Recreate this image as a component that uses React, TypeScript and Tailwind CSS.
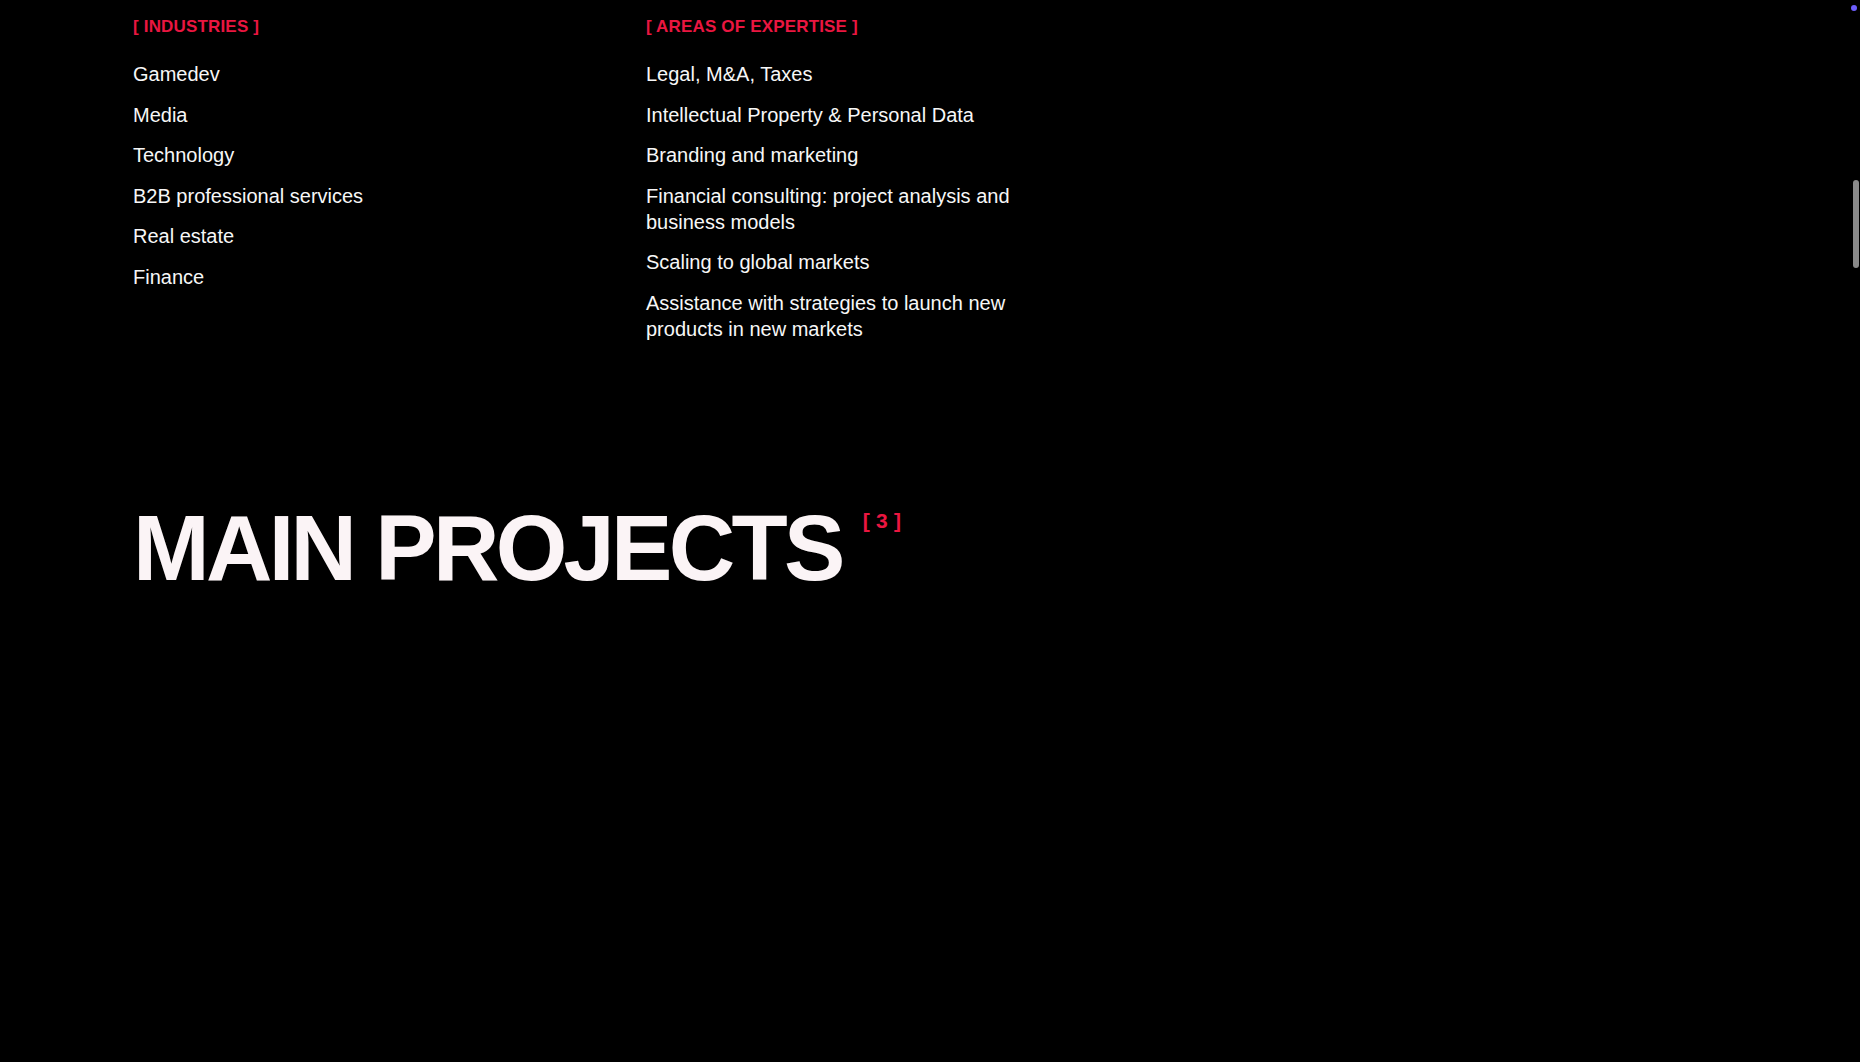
const INDUSTRIES = ['Gamedev', 'Media', 'Technology', 'B2B professional services', 'Real estate', 'Finance'];

const EXPERTISE = [
  'Legal, M&A, Taxes',
  'Intellectual Property & Personal Data',
  'Branding and marketing',
  'Financial consulting: project analysis and business models',
  'Scaling to global markets',
  'Assistance with strategies to launch new products in new markets',
];

// ─── Helpers ──────────────────────────────────────────────────────────────────

function SectionLabel({ children }: { children: string }) {
  return (
    <p className="text-[17px] leading-[20px] font-bold uppercase tracking-[0.01em] text-[#ea1640]">
      [ {children} ]
    </p>
  );
}

function List({ items }: { items: string[] }) {
  return (
    <ul className="mt-[24px] flex flex-col gap-[14.6px]">
      {items.map((item) => (
        <li key={item} className="text-[20px] leading-[26px] text-[#f7f7f7]">
          {item}
        </li>
      ))}
    </ul>
  );
}

// ─── Component ────────────────────────────────────────────────────────────────

export default function App() {
  return (
    <div
      className="relative min-h-screen w-full overflow-hidden bg-black"
      style={{ fontFamily: '"Liberation Sans", Arial, sans-serif' }}
    >
      <div className="pl-[133px] pt-[17px]">
        {/* Columns */}
        <div className="flex">
          <div className="w-[513px]">
            <SectionLabel>Industries</SectionLabel>
            <List items={INDUSTRIES} />
          </div>
          <div className="w-[400px]">
            <SectionLabel>Areas of expertise</SectionLabel>
            <List items={EXPERTISE} />
          </div>
        </div>

        {/* Heading */}
        <div className="mt-[160px] flex items-start">
          <h2 className="text-[92px] leading-none font-bold uppercase tracking-[-0.04em] text-[#fbf4f6]">
            Main Projects
          </h2>
          <span className="ml-[21px] mt-[8px] text-[21px] leading-none font-bold tracking-[0.3em] text-[#ea1640]">
            [3]
          </span>
        </div>
      </div>

      {/* Scrollbar + indicator */}
      <div className="absolute right-[3px] top-[5px] h-[6px] w-[6px] rounded-full bg-[#6d5efc]" />
      <div className="absolute right-[1px] top-[180px] h-[88px] w-[6px] rounded-full bg-[#8a8a8a]" />
    </div>
  );
}
